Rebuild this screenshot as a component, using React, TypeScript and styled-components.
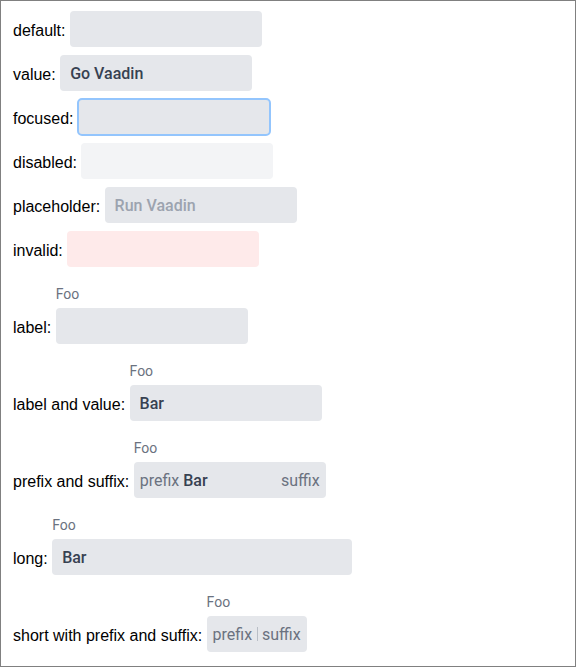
import styled, { createGlobalStyle, css } from 'styled-components';

const GlobalStyle = createGlobalStyle`
  html, body {
    margin: 0;
    padding: 0;
  }
  body {
    font-family: "Liberation Sans", Arial, sans-serif;
    font-size: 16px;
    color: #000;
    background: #fff;
  }
`;

const Page = styled.div`
  box-sizing: border-box;
  width: 100%;
  height: 100vh;
  border: 1px solid #808080;
  padding: 6px 12px;
`;

const Row = styled.div`
  display: flex;
  align-items: flex-end;
  gap: 4.45px;
  padding: 4px 0;
`;

const RowLabel = styled.span`
  line-height: 18px;
  padding-bottom: 7px;
  white-space: nowrap;
`;

const Field = styled.div`
  display: inline-flex;
  flex-direction: column;
  font-family: Roboto, "Noto Sans", sans-serif;
`;

const FieldLabel = styled.div`
  font-size: 14px;
  font-weight: 400;
  line-height: 20px;
  color: #6b7280;
  padding: 9px 0 4px;
`;

type Tone = 'default' | 'disabled' | 'invalid';

const toneColors: Record<Tone, string> = {
  default: '#e5e7eb',
  disabled: '#f3f4f6',
  invalid: '#feeaea',
};

interface BoxProps {
  $width: number;
  $tone?: Tone;
  $focused?: boolean;
}

const InputBox = styled.div<BoxProps>`
  box-sizing: border-box;
  display: flex;
  align-items: center;
  width: ${(p) => p.$width}px;
  height: 36px;
  padding: 0 6px;
  border-radius: 4px;
  background-color: ${(p) => toneColors[p.$tone ?? 'default']};
  font-size: 16px;
  ${(p) => p.$focused && css`
    outline: 2px solid #93c5fd;
    outline-offset: -1px;
  `}
`;

const Affix = styled.span`
  color: #6b7280;
  white-space: nowrap;
`;

const Value = styled.span<{ $placeholder?: boolean }>`
  flex: 1;
  min-width: 0;
  display: flex;
  align-items: center;
  padding: 0 4px;
  overflow: hidden;
  white-space: nowrap;
  font-weight: 500;
  color: ${(p) => (p.$placeholder ? '#9ca3af' : '#374151')};
`;

const Caret = styled.span`
  flex: 1;
  display: flex;
  justify-content: center;
  &::before {
    content: '';
    width: 1px;
    height: 14px;
    background: #b9bec6;
  }
`;

interface TextFieldProps {
  label?: string;
  width?: number;
  tone?: Tone;
  focused?: boolean;
  value?: string;
  placeholder?: string;
  prefix?: string;
  suffix?: string;
  narrow?: boolean;
}

const TextField = ({
  label, width = 192, tone, focused, value, placeholder, prefix, suffix, narrow,
}: TextFieldProps) => (
  <Field>
    {label && <FieldLabel>{label}</FieldLabel>}
    <InputBox $width={width} $tone={tone} $focused={focused}>
      {prefix && <Affix>{prefix}</Affix>}
      <Value $placeholder={!value && !!placeholder}>
        {narrow ? <Caret /> : (value || placeholder)}
      </Value>
      {suffix && <Affix>{suffix}</Affix>}
    </InputBox>
  </Field>
);

export default function App() {
  return (
    <>
      <GlobalStyle />
      <Page>
        <Row>
          <RowLabel>default:</RowLabel>
          <TextField />
        </Row>
        <Row>
          <RowLabel>value:</RowLabel>
          <TextField value="Go Vaadin" />
        </Row>
        <Row>
          <RowLabel>focused:</RowLabel>
          <TextField focused />
        </Row>
        <Row>
          <RowLabel>disabled:</RowLabel>
          <TextField tone="disabled" />
        </Row>
        <Row>
          <RowLabel>placeholder:</RowLabel>
          <TextField placeholder="Run Vaadin" />
        </Row>
        <Row>
          <RowLabel>invalid:</RowLabel>
          <TextField tone="invalid" />
        </Row>
        <Row>
          <RowLabel>label:</RowLabel>
          <TextField label="Foo" />
        </Row>
        <Row>
          <RowLabel>label and value:</RowLabel>
          <TextField label="Foo" value="Bar" />
        </Row>
        <Row>
          <RowLabel>prefix and suffix:</RowLabel>
          <TextField label="Foo" value="Bar" prefix="prefix" suffix="suffix" />
        </Row>
        <Row>
          <RowLabel>long:</RowLabel>
          <TextField label="Foo" value="Bar" width={300} />
        </Row>
        <Row>
          <RowLabel>short with prefix and suffix:</RowLabel>
          <TextField label="Foo" width={100} prefix="prefix" suffix="suffix" narrow />
        </Row>
      </Page>
    </>
  );
}
